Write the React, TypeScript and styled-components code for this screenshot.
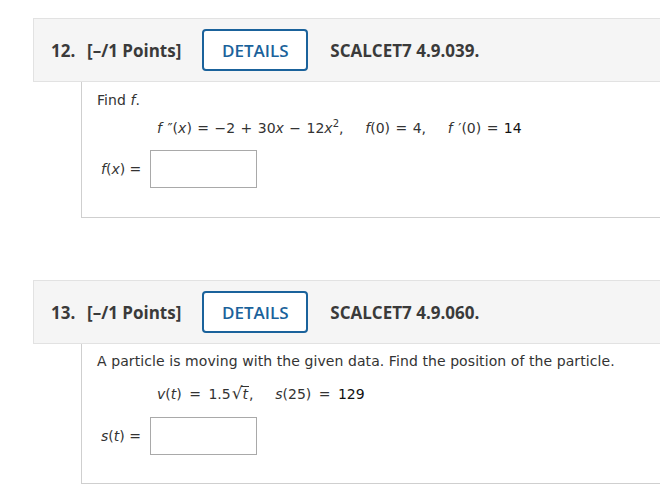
import styled, { createGlobalStyle } from "styled-components";

const GlobalStyle = createGlobalStyle`
  html, body {
    margin: 0;
    padding: 0;
    background: #ffffff;
    overflow: hidden;
  }
`;

const Page = styled.div`
  width: 660px;
  height: 489px;
  padding: 18px 0 0 33px;
  box-sizing: border-box;
  display: flex;
  flex-direction: column;
  gap: 62px;
`;

const Question = styled.section`
  display: flex;
  flex-direction: column;
`;

const Header = styled.div`
  height: 64px;
  box-sizing: border-box;
  margin-right: -20px;
  padding-left: 17px;
  display: flex;
  align-items: center;
  background: #f5f5f5;
  border: 1px solid #e2e2e2;
  border-right: none;
  font-family: "Open Sans", "Liberation Sans", sans-serif;
  font-size: 17px;
  font-weight: 700;
  color: #3a3a3a;
`;

const Number = styled.span`
  width: 36px;
`;

const Points = styled.span`
  margin-right: 21px;
`;

const DetailsButton = styled.button`
  width: 106px;
  height: 42px;
  box-sizing: border-box;
  border: 2px solid #1a629b;
  border-radius: 4px;
  background: #ffffff;
  color: #1a629b;
  font-family: "Open Sans", "Liberation Sans", sans-serif;
  font-size: 17px;
  font-weight: 600;
  padding: 0;
  margin-right: 22px;
`;

const Ref = styled.span``;

const Body = styled.div<{ $height: number }>`
  margin-left: 48px;
  height: ${({ $height }) => $height}px;
  box-sizing: border-box;
  border-left: 1px solid #cfcfcf;
  border-bottom: 1px solid #cfcfcf;
  margin-right: -20px;
  padding: ${({ $height }) => ($height > 136 ? "8px" : "9px")} 16px 0 15px;
  font-family: "DejaVu Sans", Verdana, sans-serif;
  font-size: 14px;
  color: #333333;
`;

const Prompt = styled.p`
  margin: 0;
  line-height: 18px;
  letter-spacing: 0.08px;
`;

const Given = styled.div<{ $top: number }>`
  margin: ${({ $top }) => $top}px 0 0 60px;
  line-height: 18px;
  word-spacing: 1px;
  white-space: pre;
`;

const Eq = styled.span`
  margin: 0 2px;
`;

const Dark = styled.span`
  color: #111111;
`;

const Sup = styled.sup`
  font-size: 10px;
  line-height: 0;
`;

const Radical = styled.span`
  display: inline-flex;
  align-items: flex-end;
  margin-left: 1px;
`;

const RootSign = styled.span`
  font-size: 17px;
  line-height: 18px;
`;

const Radicand = styled.span`
  border-top: 1px solid #333333;
  padding: 0 1px;
  line-height: 15px;
  margin-left: -1px;
`;

const AnswerRow = styled.div<{ $top: number }>`
  margin-top: ${({ $top }) => $top}px;
  display: flex;
  align-items: center;
  gap: 9px;
  padding-left: 4px;
`;

const Label = styled.span``;

const AnswerBox = styled.input`
  width: 107px;
  height: 38px;
  box-sizing: border-box;
  border: 1px solid #a9a9a9;
  background: #ffffff;
  margin: 0;
`;

export default function App() {
  return (
    <>
      <GlobalStyle />
      <Page>
        <Question>
          <Header>
            <Number>12.</Number>
            <Points>[–/1 Points]</Points>
            <DetailsButton>DETAILS</DetailsButton>
            <Ref>SCALCET7 4.9.039.</Ref>
          </Header>
          <Body $height={136}>
            <Prompt>
              Find <i>f</i>.
            </Prompt>
            <Given $top={10}>
              <i>f</i> ″(<i>x</i>) = −2 + 30<i>x</i> − 12<i>x</i>
              <Sup>2</Sup>,    <i>f</i>(0) = 4,    <i>f</i> ′(0) = <Dark>14</Dark>
            </Given>
            <AnswerRow $top={13}>
              <Label>
                <i>f</i>(<i>x</i>) =
              </Label>
              <AnswerBox />
            </AnswerRow>
          </Body>
        </Question>
        <Question>
          <Header>
            <Number>13.</Number>
            <Points>[–/1 Points]</Points>
            <DetailsButton>DETAILS</DetailsButton>
            <Ref>SCALCET7 4.9.060.</Ref>
          </Header>
          <Body $height={140}>
            <Prompt>
              A particle is moving with the given data. Find the position of the particle.
            </Prompt>
            <Given $top={14}>
              <i>v</i>(<i>t</i>)<Eq> = </Eq>1.5
              <Radical>
                <RootSign>√</RootSign>
                <Radicand>
                  <i>t</i>
                </Radicand>
              </Radical>
              ,    <i>s</i>(25)<Eq> = </Eq>
              <Dark>129</Dark>
            </Given>
            <AnswerRow $top={14}>
              <Label>
                <i>s</i>(<i>t</i>) =
              </Label>
              <AnswerBox />
            </AnswerRow>
          </Body>
        </Question>
      </Page>
    </>
  );
}
